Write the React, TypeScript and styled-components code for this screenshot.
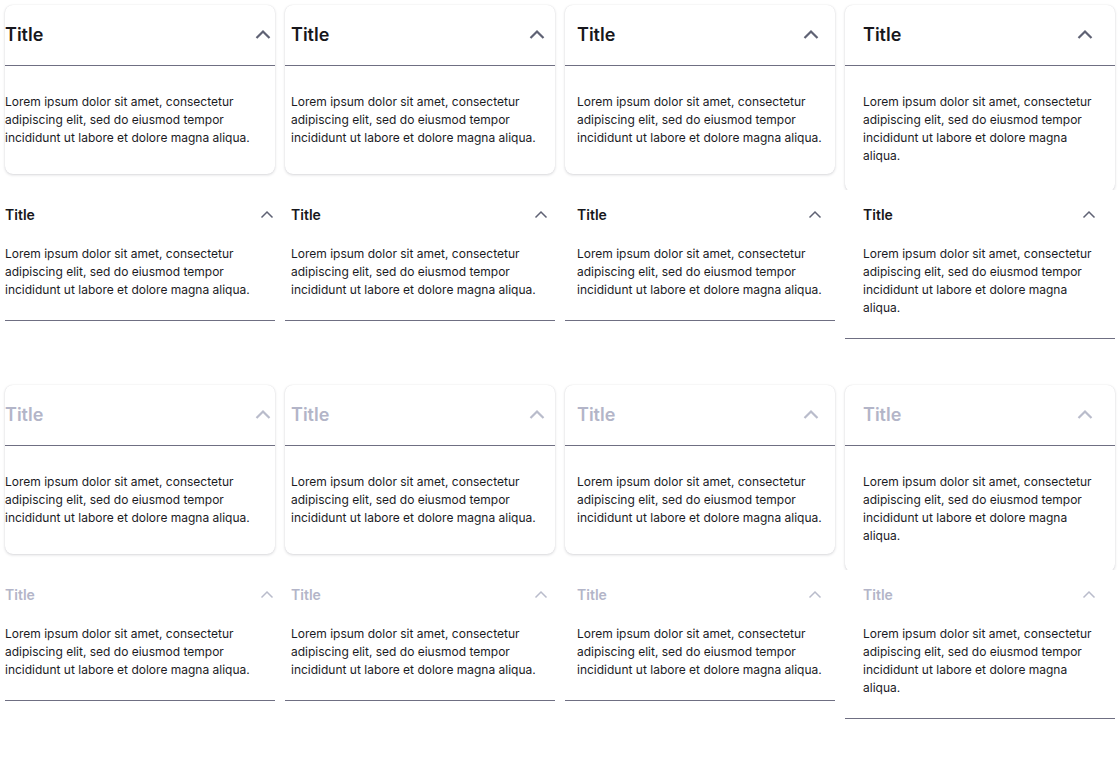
import React from 'react';
import styled, { createGlobalStyle } from 'styled-components';

const GlobalStyle = createGlobalStyle`
    body {
        margin: 0;
        background: #ffffff;
        font-family: Inter, "Noto Sans", sans-serif;
        color: #1b1b1f;
    }
`;

const Grid = styled.div`
    display: grid;
    grid-template-columns: repeat(4, 280px);
    grid-auto-rows: 190px;
`;

const Cell = styled.div`
    padding: 5px;
    overflow: hidden;
    background: #ffffff;
`;

const Card = styled.div<{ $raised: boolean }>`
    background: #ffffff;
    border-radius: ${(p) => (p.$raised ? '8px' : '0')};
    box-shadow: ${(p) =>
        p.$raised ? '0 1px 3px rgba(20, 20, 40, 0.16), 0 0 1px rgba(20, 20, 40, 0.12)' : 'none'};
    border-bottom: ${(p) => (p.$raised ? 'none' : '1px solid #6f6f82')};
`;

const Header = styled.div<{ $raised: boolean; $inset: number }>`
    display: flex;
    align-items: center;
    justify-content: space-between;
    height: ${(p) => (p.$raised ? '59px' : '39px')};
    padding: 0 ${(p) => p.$inset}px 1px;
    border-bottom: ${(p) => (p.$raised ? '1px solid #6f6f82' : 'none')};
`;

const Title = styled.span<{ $raised: boolean; $disabled: boolean }>`
    font-size: ${(p) => (p.$raised ? '18px' : '14px')};
    font-weight: 600;
    color: ${(p) => (p.$disabled ? '#b3b5c8' : '#17171c')};
`;

const Chevron = styled.svg<{ $disabled: boolean }>`
    display: block;
    flex: none;
    color: ${(p) => (p.$disabled ? '#b9bccb' : '#5f6274')};
`;

const Body = styled.div<{ $raised: boolean; $inset: number }>`
    padding: ${(p) => (p.$raised ? '27px' : '10px')} ${(p) => p.$inset}px
        ${(p) => (p.$raised ? '27px' : '21px')};
    font-size: 12px;
    line-height: 18px;
    color: #1b1b1f;
`;

const TEXT =
    'Lorem ipsum dolor sit amet, consectetur adipiscing elit, sed do eiusmod tempor incididunt ut labore et dolore magna aliqua.';

const Arrow: React.FC<{ raised: boolean; disabled: boolean }> = ({ raised, disabled }) =>
    raised ? (
        <Chevron $disabled={disabled} width="24" height="24" viewBox="0 0 24 24" fill="none">
            <path d="M5.5 15 12 8.5 18.5 15" stroke="currentColor" strokeWidth="2.2" />
        </Chevron>
    ) : (
        <Chevron $disabled={disabled} width="16" height="16" viewBox="0 0 16 16" fill="none">
            <path d="M2.5 10.5 8 5 13.5 10.5" stroke="currentColor" strokeWidth="1.5" />
        </Chevron>
    );

const Panel: React.FC<{ raised: boolean; disabled: boolean; inset: number }> = ({
    raised,
    disabled,
    inset,
}) => (
    <Cell>
        <Card $raised={raised}>
            <Header $raised={raised} $inset={inset}>
                <Title $raised={raised} $disabled={disabled}>Title</Title>
                <Arrow raised={raised} disabled={disabled} />
            </Header>
            <Body $raised={raised} $inset={inset}>{TEXT}</Body>
        </Card>
    </Cell>
);

const rows = [
    { raised: true, disabled: false },
    { raised: false, disabled: false },
    { raised: true, disabled: true },
    { raised: false, disabled: true },
];

const insets = [0, 6, 12, 18];

export default function App() {
    return (
        <>
            <GlobalStyle />
            <Grid>
                {rows.map((row, r) =>
                    insets.map((inset) => (
                        <Panel key={`${r}-${inset}`} raised={row.raised} disabled={row.disabled} inset={inset} />
                    ))
                )}
            </Grid>
        </>
    );
}
